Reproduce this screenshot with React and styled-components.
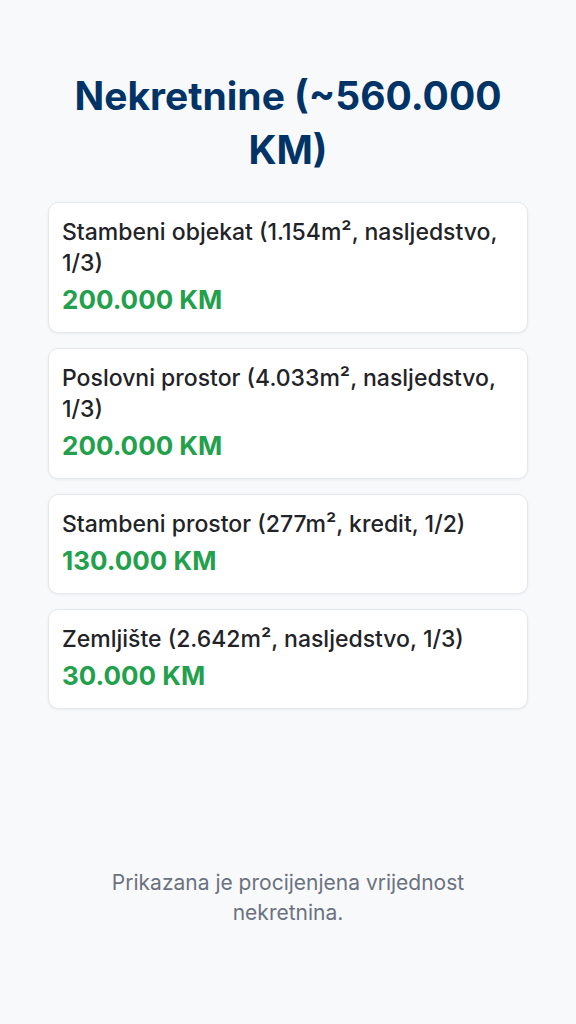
import React from 'react';
import styled, { createGlobalStyle } from 'styled-components';

const GlobalStyle = createGlobalStyle`
    html, body {
        margin: 0;
        padding: 0;
        background: #f8f9fb;
    }
    body {
        font-family: Inter, "Noto Sans", "Liberation Sans", sans-serif;
        -webkit-font-smoothing: antialiased;
    }
`;

const properties = [
    { label: 'Stambeni objekat (1.154m², nasljedstvo, 1/3)', value: '200.000 KM' },
    { label: 'Poslovni prostor (4.033m², nasljedstvo, 1/3)', value: '200.000 KM' },
    { label: 'Stambeni prostor (277m², kredit, 1/2)', value: '130.000 KM' },
    { label: 'Zemljište (2.642m², nasljedstvo, 1/3)', value: '30.000 KM' },
];

const App = () => {
    return (
        <Page>
            <GlobalStyle />
            <Title>Nekretnine (~560.000 KM)</Title>
            <List>
                {properties.map((p) => (
                    <Card key={p.label}>
                        <Label>{p.label}</Label>
                        <Amount>{p.value}</Amount>
                    </Card>
                ))}
            </List>
            <Note>Prikazana je procijenjena vrijednost nekretnina.</Note>
        </Page>
    );
};

const Page = styled.div`
    min-height: 100vh;
    box-sizing: border-box;
    display: flex;
    flex-direction: column;
    padding: 69px 48px 96px;
`;

const Title = styled.h1`
    margin: 0 0 25px;
    padding: 0 16px;
    text-align: center;
    font-size: 39px;
    line-height: 54px;
    font-weight: 700;
    color: #003366;
`;

const List = styled.div`
    display: flex;
    flex-direction: column;
    gap: 15px;
`;

const Card = styled.div`
    background: #ffffff;
    border: 1px solid #e4e7eb;
    border-radius: 10px;
    box-shadow: 0 1px 3px rgba(15, 23, 42, 0.06);
    padding: 14px 13px 16px;
`;

const Label = styled.div`
    font-size: 23px;
    line-height: 31px;
    font-weight: 500;
    color: #222327;
`;

const Amount = styled.div`
    margin-top: 5px;
    font-size: 26px;
    line-height: 32px;
    font-weight: 700;
    color: #22a04b;
`;

const Note = styled.p`
    margin: auto 0 0;
    padding: 0 40px;
    text-align: center;
    font-size: 21px;
    line-height: 30px;
    color: #6b7280;
`;

export default App;
